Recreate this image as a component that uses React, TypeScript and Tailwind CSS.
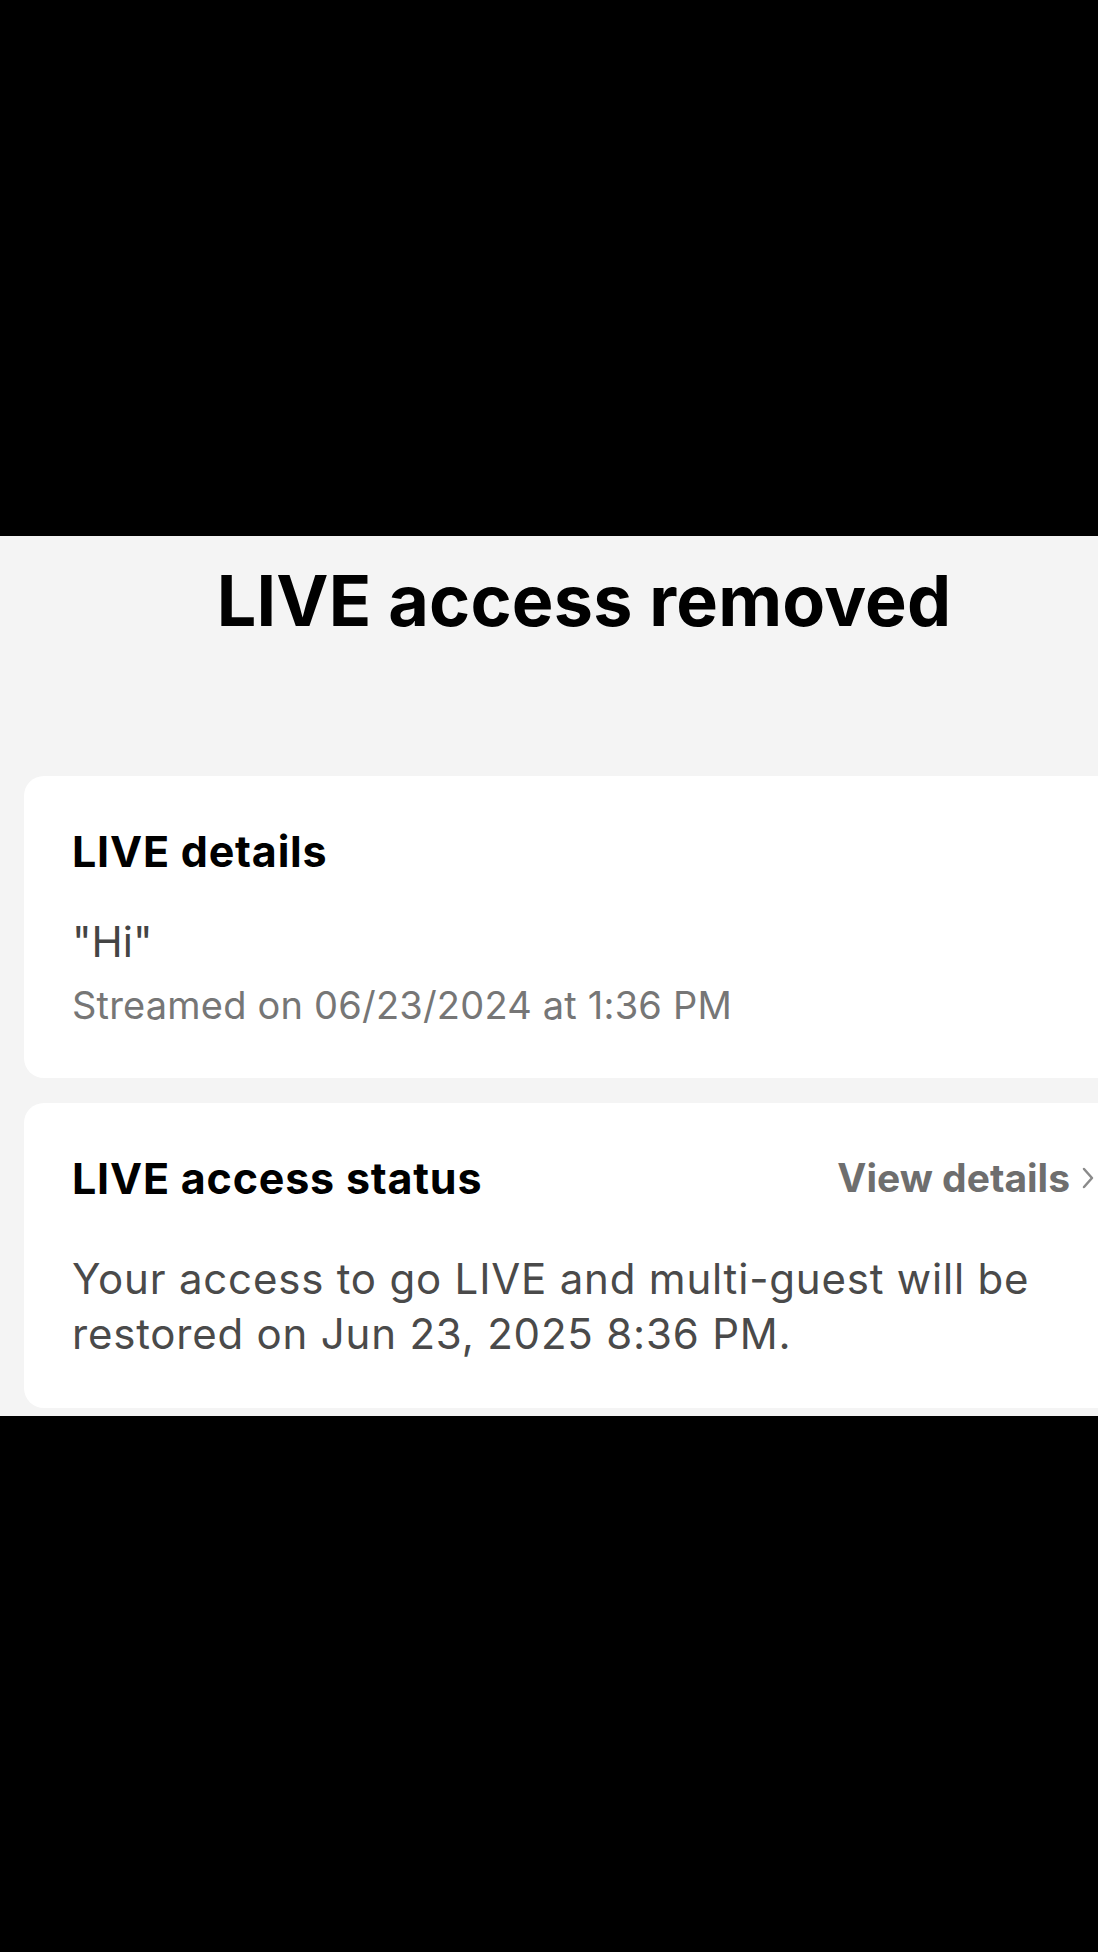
export default function App() {
  return (
    <div className="w-[1098px] h-[1952px] overflow-hidden bg-black font-['Inter',sans-serif]">
      {/* top black area */}
      <div className="h-[536px] bg-black" />

      {/* sheet, wider than the viewport so it crops on the right */}
      <div className="w-[1168px] h-[880px] bg-[#f4f4f4] pt-[30px]">
        <h1 className="text-center text-[70px] leading-[70px] font-bold text-black tracking-[0.2px]">
          LIVE access removed
        </h1>

        <div className="mt-[140px] mx-[24px] flex flex-col gap-[25px]">
          {/* LIVE details */}
          <div className="rounded-[20px] bg-white px-[48px] pt-[54px] pb-[54px]">
            <div className="text-[43px] leading-[42px] font-bold text-black tracking-[0.8px]">LIVE details</div>
            <div className="mt-[49px] text-[42px] leading-[41px] text-[#444]">"Hi"</div>
            <div className="mt-[25px] text-[38px] leading-[37px] text-[#767676] tracking-[0.2px]">
              Streamed on 06/23/2024 at 1:36 PM
            </div>
          </div>

          {/* LIVE access status */}
          <div className="rounded-[20px] bg-white px-[48px] pt-[54px] pb-[47px]">
            <div className="flex items-center justify-between">
              <div className="text-[43px] leading-[42px] font-bold text-black tracking-[0.8px]">LIVE access status</div>
              <div className="flex items-center gap-[12px] text-[39px] leading-[42px] font-bold text-[#6e6e6e] pr-[2px]">
                View details
                <svg width="12" height="22" viewBox="0 0 12 22" fill="none">
                  <path d="M2 2l8 9-8 9" stroke="#8a8a8a" strokeWidth="2.5" strokeLinecap="round" strokeLinejoin="round" />
                </svg>
              </div>
            </div>
            <p className="mt-[52px] text-[42px] leading-[55px] text-[#4a4a4a] tracking-[0.8px]">
              Your access to go LIVE and multi-guest will be restored on Jun 23, 2025 8:36 PM.
            </p>
          </div>
        </div>
      </div>
    </div>
  );
}
